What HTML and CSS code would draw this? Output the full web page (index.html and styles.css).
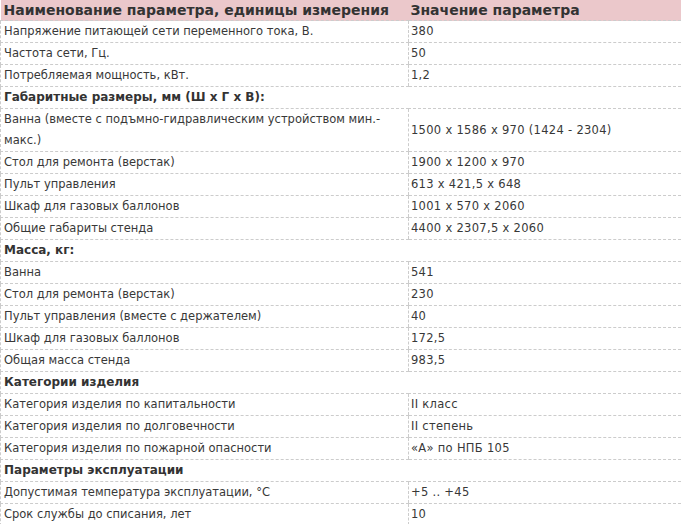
FILE: index.html
```html
<!DOCTYPE html>
<html lang="ru">
<head>
<meta charset="utf-8">
<title>Технические характеристики</title>
<link rel="stylesheet" href="styles.css">
</head>
<body>
<table class="spec">
  <thead>
    <tr><th class="c1">Наименование параметра, единицы измерения</th><th class="c2">Значение параметра</th></tr>
  </thead>
  <tbody>
    <tr><td>Напряжение питающей сети переменного тока, В.</td><td class="v">380</td></tr>
    <tr><td>Частота сети, Гц.</td><td class="v">50</td></tr>
    <tr><td>Потребляемая мощность, кВт.</td><td class="v">1,2</td></tr>
    <tr><td class="sec" colspan="2">Габаритные размеры, мм (Ш х Г х В):</td></tr>
    <tr><td>Ванна (вместе с подъмно-гидравлическим устройством мин.-макс.)</td><td class="v">1500 x 1586 x 970 (1424 - 2304)</td></tr>
    <tr><td>Стол для ремонта (верстак)</td><td class="v">1900 x 1200 x 970</td></tr>
    <tr><td>Пульт управления</td><td class="v">613 x 421,5 x 648</td></tr>
    <tr><td>Шкаф для газовых баллонов</td><td class="v">1001 x 570 x 2060</td></tr>
    <tr><td>Общие габариты стенда</td><td class="v">4400 x 2307,5 x 2060</td></tr>
    <tr><td class="sec" colspan="2">Масса, кг:</td></tr>
    <tr><td>Ванна</td><td class="v">541</td></tr>
    <tr><td>Стол для ремонта (верстак)</td><td class="v">230</td></tr>
    <tr><td>Пульт управления (вместе с держателем)</td><td class="v">40</td></tr>
    <tr><td>Шкаф для газовых баллонов</td><td class="v">172,5</td></tr>
    <tr><td>Общая масса стенда</td><td class="v">983,5</td></tr>
    <tr><td class="sec" colspan="2">Категории изделия</td></tr>
    <tr><td>Категория изделия по капитальности</td><td class="v">II класс</td></tr>
    <tr><td>Категория изделия по долговечности</td><td class="v">II степень</td></tr>
    <tr><td>Категория изделия по пожарной опасности</td><td class="v">«А» по НПБ 105</td></tr>
    <tr><td class="sec" colspan="2">Параметры эксплуатации</td></tr>
    <tr><td>Допустимая температура эксплуатации, °С</td><td class="v">+5 .. +45</td></tr>
    <tr><td>Срок службы до списания, лет</td><td class="v">10</td></tr>
  </tbody>
</table>
</body>
</html>
```
FILE: styles.css
```css
html, body {
  margin: 0;
  padding: 0;
  background: #fff;
}
body {
  font-family: "DejaVu Sans", Verdana, sans-serif;
  font-size: 11.5px;
  color: #383838;
}
.spec {
  border-collapse: collapse;
  width: 100%;
  table-layout: fixed;
}
.spec th {
  background: #ebc8cb;
  color: #333;
  font-weight: bold;
  font-size: 14px;
  text-align: left;
  line-height: 20px;
  padding: 0 2px;
  border-bottom: 1px dashed #ccc;
}
.spec th.c1 {
  width: 403px;
  padding-left: 3px;
}
.spec td {
  line-height: 21px;
  padding: 0 2px 0 3px;
  border-bottom: 1px dashed #ccc;
  border-left: 1px dashed #ccc;
  vertical-align: middle;
}
.spec td.v {
  padding-left: 2px;
  letter-spacing: 0.3px;
}
.spec td.sec {
  font-weight: bold;
  font-size: 12px;
  color: #333;
}
```
